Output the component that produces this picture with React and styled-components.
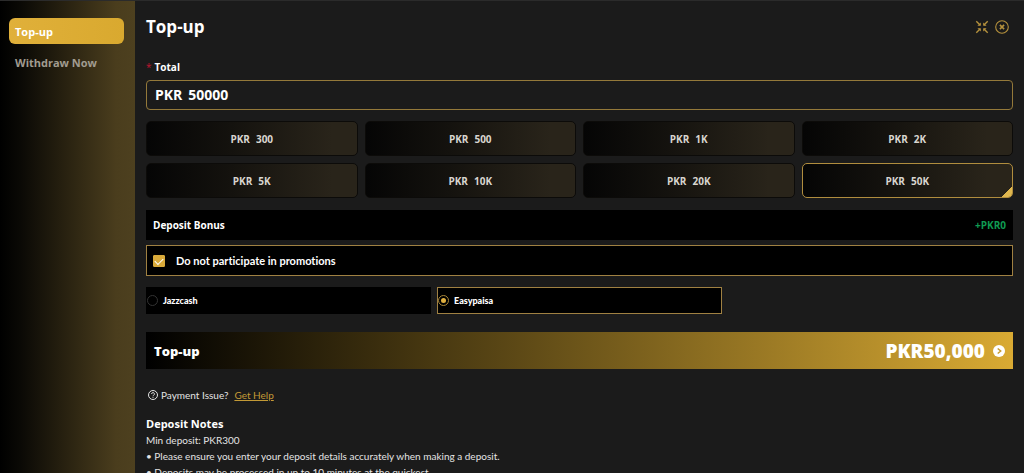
import React, { useState } from 'react';
import styled, { createGlobalStyle } from 'styled-components';

const GlobalStyle = createGlobalStyle`
    * {
        box-sizing: border-box;
    }
    body {
        margin: 0;
        background: #1b1b1b;
        color: #fff;
        font-family: "Open Sans", "Noto Sans", sans-serif;
        font-size: 12px;
        line-height: 16px;
    }
    button, input {
        font-family: inherit;
        color: inherit;
    }
`;

const smallFont = '"Lato", "Open Sans", sans-serif';

const amounts = [
    { value: 300, label: '300' },
    { value: 500, label: '500' },
    { value: 1000, label: '1K' },
    { value: 2000, label: '2K' },
    { value: 5000, label: '5K' },
    { value: 10000, label: '10K' },
    { value: 20000, label: '20K' },
    { value: 50000, label: '50K' },
];

const methods = ['Jazzcash', 'Easypaisa'];

const ShrinkIcon = () => (
    <svg width="14" height="14" viewBox="0 0 14 14" fill="none" stroke="currentColor" strokeWidth="1.4" aria-hidden="true">
        <path d="M1.3 1.3 5 5M12.7 1.3 9 5M1.3 12.7 5 9M12.7 12.7 9 9" />
        <path d="M5.8 2.4v3.4H2.4zM8.2 2.4v3.4h3.4zM5.8 11.6V8.2H2.4zM8.2 11.6V8.2h3.4z" fill="currentColor" stroke="none" />
    </svg>
);

const CloseIcon = () => (
    <svg width="14" height="14" viewBox="0 0 14 14" fill="none" stroke="currentColor" aria-hidden="true">
        <circle cx="7" cy="7" r="6.3" strokeWidth="1.1" />
        <path d="M4.9 4.9l4.2 4.2M9.1 4.9 4.9 9.1" strokeWidth="1.6" />
    </svg>
);

const ArrowIcon = () => (
    <svg width="12" height="12" viewBox="0 0 12 12" aria-hidden="true">
        <circle cx="6" cy="6" r="6" fill="#fff" />
        <path d="M4.7 3.5 7.7 6l-3 2.5" fill="none" stroke="#c79c2f" strokeWidth="1.5" />
    </svg>
);

const HelpIcon = () => (
    <svg width="10" height="10" viewBox="0 0 10 10" fill="none" stroke="currentColor" strokeWidth="1" aria-hidden="true">
        <circle cx="5" cy="5" r="4.5" />
        <path d="M3.6 4a1.4 1.4 0 1 1 2.1 1.2c-.5.3-.7.5-.7 1" />
        <path d="M5 6.9v.9" />
    </svg>
);

const App = () => {
    const [amount, setAmount] = useState(50000);
    const [skipPromo, setSkipPromo] = useState(true);
    const [method, setMethod] = useState('Easypaisa');

    return (
        <Page>
            <GlobalStyle />
            <Sidebar>
                <NavButton type="button" $active>Top-up</NavButton>
                <NavButton type="button">Withdraw Now</NavButton>
            </Sidebar>
            <Main>
                <Header>
                    <Title>Top-up</Title>
                    <Tools>
                        <IconButton type="button" aria-label="Shrink"><ShrinkIcon /></IconButton>
                        <IconButton type="button" aria-label="Close"><CloseIcon /></IconButton>
                    </Tools>
                </Header>

                <Label htmlFor="total"><Star>*</Star>Total</Label>
                <AmountField>
                    <span>PKR</span>
                    <AmountInput
                        id="total"
                        value={amount}
                        onChange={(e) => setAmount(Number(e.target.value.replace(/\D/g, '')))}
                    />
                </AmountField>

                <AmountGrid>
                    {amounts.map((item) => (
                        <AmountButton
                            type="button"
                            key={item.value}
                            $active={item.value === amount}
                            onClick={() => setAmount(item.value)}
                        >
                            <span>PKR</span>
                            <span>{item.label}</span>
                        </AmountButton>
                    ))}
                </AmountGrid>

                <Bonus>
                    <span>Deposit Bonus</span>
                    <BonusValue>+PKR0</BonusValue>
                </Bonus>

                <Promo>
                    <Checkbox
                        type="checkbox"
                        checked={skipPromo}
                        onChange={(e) => setSkipPromo(e.target.checked)}
                    />
                    Do not participate in promotions
                </Promo>

                <Methods>
                    {methods.map((name) => (
                        <Method key={name} $active={name === method}>
                            <Radio
                                type="radio"
                                name="method"
                                checked={name === method}
                                onChange={() => setMethod(name)}
                            />
                            {name}
                        </Method>
                    ))}
                </Methods>

                <Submit type="button">
                    <span>Top-up</span>
                    <SubmitTotal>
                        PKR{amount.toLocaleString('en-US')}
                        <ArrowIcon />
                    </SubmitTotal>
                </Submit>

                <Help>
                    <HelpIcon />
                    <span>Payment Issue?</span>
                    <HelpLink href="#help">Get Help</HelpLink>
                </Help>

                <NotesTitle>Deposit Notes</NotesTitle>
                <Note>Min deposit: PKR300</Note>
                <Note>• Please ensure you enter your deposit details accurately when making a deposit.</Note>
                <Note>• Deposits may be processed in up to 10 minutes at the quickest.</Note>
            </Main>
        </Page>
    );
};

const Page = styled.div`
    display: flex;
    height: 100vh;
    overflow: hidden;
    border-top: 1px solid #2b2b2b;
`;

const Sidebar = styled.nav`
    flex: 0 0 135px;
    display: flex;
    flex-direction: column;
    gap: 5px;
    padding: 17px 11px 0 9px;
    background: linear-gradient(90deg, #000 0%, #0a0905 15%, #4a3d1d 86%, #4d401f 100%);
`;

const NavButton = styled.button`
    height: 26px;
    padding: 0 6px;
    border: 0;
    border-radius: 6px;
    background: ${({ $active }) => ($active ? 'linear-gradient(90deg, #e0b03a, #d9a92f)' : 'none')};
    color: ${({ $active }) => ($active ? '#fff' : '#a19c90')};
    font-size: 11px;
    font-weight: 700;
    line-height: 15px;
    text-align: left;
    cursor: pointer;
`;

const Main = styled.main`
    flex: 1;
    min-width: 0;
    padding: 14px 11px 0;
    overflow: hidden;
`;

const Header = styled.header`
    display: flex;
    align-items: center;
    justify-content: space-between;
    height: 24px;
    padding-right: 4px;
`;

const Title = styled.h1`
    margin: 0;
    font-size: 17px;
    font-weight: 700;
    line-height: 22px;
`;

const Tools = styled.div`
    display: flex;
    gap: 6px;
`;

const IconButton = styled.button`
    display: flex;
    padding: 0;
    border: 0;
    background: none;
    color: #b6923d;
    cursor: pointer;
`;

const Label = styled.label`
    display: flex;
    gap: 3px;
    margin-top: 20px;
    font-size: 10px;
    font-weight: 700;
`;

const Star = styled.span`
    color: #c01530;
    font-weight: 400;
`;

const AmountField = styled.div`
    display: flex;
    align-items: center;
    gap: 6px;
    height: 30px;
    margin-top: 5px;
    padding: 0 8px;
    border: 1px solid #94793a;
    border-radius: 4px;
    font-size: 14px;
    font-weight: 700;
    line-height: 18px;
`;

const AmountInput = styled.input`
    flex: 1;
    min-width: 0;
    height: 18px;
    padding: 0;
    border: 0;
    outline: 0;
    background: none;
    font-size: 14px;
    font-weight: 700;
    line-height: 18px;
`;

const AmountGrid = styled.div`
    display: grid;
    grid-template-columns: repeat(4, 1fr);
    gap: 7px;
    margin-top: 11px;
`;

const AmountButton = styled.button`
    position: relative;
    display: flex;
    align-items: center;
    justify-content: center;
    gap: 6px;
    height: 35px;
    padding: 0;
    border: 1px solid ${({ $active }) => ($active ? '#b08d3e' : '#0c0b09')};
    border-radius: 5px;
    background: linear-gradient(90deg, #050505 0%, #14120e 40%, #29241a 88%);
    color: #d8d5cf;
    font-size: 10px;
    font-weight: 700;
    overflow: hidden;
    cursor: pointer;

    &::after {
        content: "";
        display: ${({ $active }) => ($active ? 'block' : 'none')};
        position: absolute;
        right: 0;
        bottom: 0;
        width: 11px;
        height: 10px;
        background: linear-gradient(135deg, transparent 50%, #e0b84f 50%);
    }
`;

const Bonus = styled.div`
    display: flex;
    align-items: center;
    justify-content: space-between;
    height: 30px;
    margin-top: 12px;
    padding: 0 7px;
    background: #000;
    font-size: 10px;
    font-weight: 700;
`;

const BonusValue = styled.span`
    color: #0f9b52;
`;

const Promo = styled.label`
    display: flex;
    align-items: center;
    gap: 11px;
    height: 31px;
    margin-top: 5px;
    padding: 0 6px;
    border: 1px solid #a08142;
    background: #000;
    font-family: ${smallFont};
    font-size: 11px;
    font-weight: 700;
    font-variant-ligatures: none;
`;

const Checkbox = styled.input`
    appearance: none;
    width: 12px;
    height: 12px;
    margin: 0;
    border: 1px solid #d9aa3a;
    border-radius: 1px;

    &:checked {
        background: #d9aa3a;
    }
    &:checked::before {
        content: "";
        display: block;
        width: 7px;
        height: 4px;
        margin: 2px 1px;
        border: solid #fff;
        border-width: 0 0 1px 1px;
        transform: rotate(-45deg);
    }
`;

const Methods = styled.div`
    display: grid;
    grid-template-columns: repeat(3, 1fr);
    gap: 6px;
    margin-top: 11px;
`;

const Method = styled.label`
    display: flex;
    align-items: center;
    gap: 5px;
    height: 27px;
    border: 1px solid ${({ $active }) => ($active ? '#a08142' : '#000')};
    background: #000;
    font-family: ${smallFont};
    font-size: 9px;
    font-weight: 900;
`;

const Radio = styled.input`
    appearance: none;
    display: grid;
    place-items: center;
    width: 11px;
    height: 11px;
    margin: 0;
    border: 1px solid #333;
    border-radius: 50%;

    &:checked {
        border-color: #a8873a;
    }
    &:checked::before {
        content: "";
        width: 5px;
        height: 5px;
        border-radius: 50%;
        background: #e0b040;
    }
`;

const Submit = styled.button`
    display: flex;
    align-items: center;
    justify-content: space-between;
    width: 100%;
    height: 37px;
    margin-top: 18px;
    padding: 0 8px;
    border: 0;
    background: linear-gradient(90deg, #000 0%, #d9aa33 100%);
    font-size: 13px;
    font-weight: 800;
    cursor: pointer;
`;

const SubmitTotal = styled.span`
    display: flex;
    align-items: center;
    gap: 8px;
    font-size: 19px;
`;

const Help = styled.div`
    display: flex;
    align-items: center;
    gap: 3px;
    margin-top: 18px;
    padding-left: 2px;
    color: #e4e4e4;
    font-family: ${smallFont};
    font-size: 10px;
`;

const HelpLink = styled.a`
    margin-left: 3px;
    color: #c39a36;
`;

const NotesTitle = styled.h2`
    margin: 13px 0 0;
    font-size: 11px;
    font-weight: 700;
`;

const Note = styled.p`
    margin: 0;
    color: #e4e4e4;
    font-family: ${smallFont};
    font-size: 10px;
`;

export default App;
